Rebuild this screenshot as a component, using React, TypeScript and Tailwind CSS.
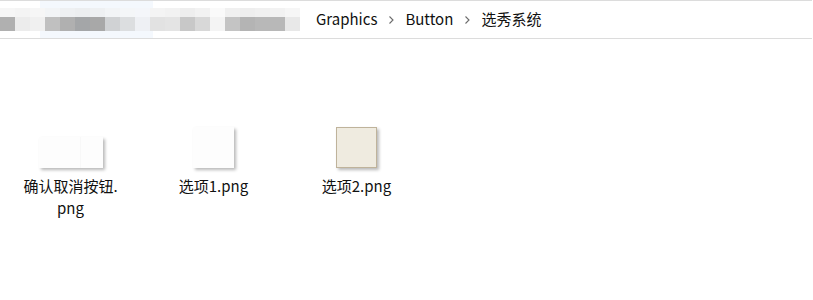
import React from "react"

const topCells = [
    "#f6f6f6", "#f4f4f4", "#f6f6f6", "#f2f4f6", "#eef0f2", "#eceef0", "#eef0f2", "#f2f4f6",
    "#f4f6f8", "#f4f6fa", "#f4f4f4", "#f2f2f2", "#eeeeee", "#f2f2f2", "#fafafa", "#f0f0f0",
    "#eeeeee", "#f0f0f0", "#f2f2f2", "#f6f6f6",
]
const bottomCells = [
    "#b0b0b0", "#ececec", "#f0f0f0", "#c0c0c0", "#b0b0b0", "#a4a6a8", "#a8a8a8", "#d0d2d4",
    "#dcdee0", "#eef0f4", "#e2e2e2", "#e4e4e4", "#c8c8c8", "#d8d8d8", "#f4f4f4", "#c4c4c4",
    "#b4b4b4", "#b8b8b8", "#b8b8b8", "#e8e8e8",
]

const Chevron = () => (
    <svg width="8" height="10" viewBox="0 0 8 10" className="mx-[10px]">
        <path d="M2.5 1.5 L6 5 L2.5 8.5" fill="none" stroke="#6b6b6b" strokeWidth="1.1" />
    </svg>
)

interface FileItemProps {
    thumb: React.ReactElement
    lines: string[]
}

const FileItem: React.FC<FileItemProps> = ({ thumb, lines }) => (
    <div className="flex w-[143px] flex-col items-center">
        <div className="flex h-[64px] items-end">{thumb}</div>
        <div className="mt-[7px] flex flex-col items-center text-[15px] leading-[22px] text-[#111]">
            {lines.map((l) => (
                <span key={l}>{l}</span>
            ))}
        </div>
    </div>
)

export default function App() {
    return (
        <div
            className="h-[300px] w-[813px] overflow-hidden bg-white"
            style={{ fontFamily: '"Microsoft YaHei", "Noto Sans CJK SC", sans-serif' }}
        >
            {/* ADDRESS BAR */}
            <div className="mr-[1px] flex h-[39px] items-center border-y border-[#dcdcdc]">
                <div className="relative flex h-full w-[305px] items-center">
                    <div className="absolute left-[40px] top-0 h-full w-[113px] bg-[#f4f8fd]" />
                    <div className="relative flex flex-col">
                        <div className="flex h-[9px]">
                            {topCells.map((c, i) => (
                                <div key={i} className="h-full w-[15px]" style={{ background: c }} />
                            ))}
                        </div>
                        <div className="flex h-[14px]">
                            {bottomCells.map((c, i) => (
                                <div key={i} className="h-full w-[15px]" style={{ background: c }} />
                            ))}
                        </div>
                    </div>
                </div>
                <div className="ml-[11px] flex items-center text-[15px] text-[#111]">
                    <span>Graphics</span>
                    <Chevron />
                    <span>Button</span>
                    <Chevron />
                    <span>选秀系统</span>
                </div>
            </div>

            {/* FILES */}
            <div className="ml-[-1px] mt-[65px] flex">
                <FileItem
                    lines={["确认取消按钮.", "png"]}
                    thumb={
                        <div className="flex h-[31px] w-[64px] bg-[#fdfdfd] shadow-[2px_2px_3px_rgba(0,0,0,0.28)]">
                            <div className="h-full w-[42px] border-r border-[#f8f8f8]" />
                        </div>
                    }
                />
                <FileItem
                    lines={["选项1.png"]}
                    thumb={<div className="h-[41px] w-[41px] bg-[#fdfdfd] shadow-[2px_2px_3px_rgba(0,0,0,0.28)]" />}
                />
                <FileItem
                    lines={["选项2.png"]}
                    thumb={
                        <div className="h-[41px] w-[41px] border border-[#bfb39b] bg-[#efebe0] shadow-[2px_2px_3px_rgba(0,0,0,0.28)]" />
                    }
                />
            </div>
        </div>
    )
}
